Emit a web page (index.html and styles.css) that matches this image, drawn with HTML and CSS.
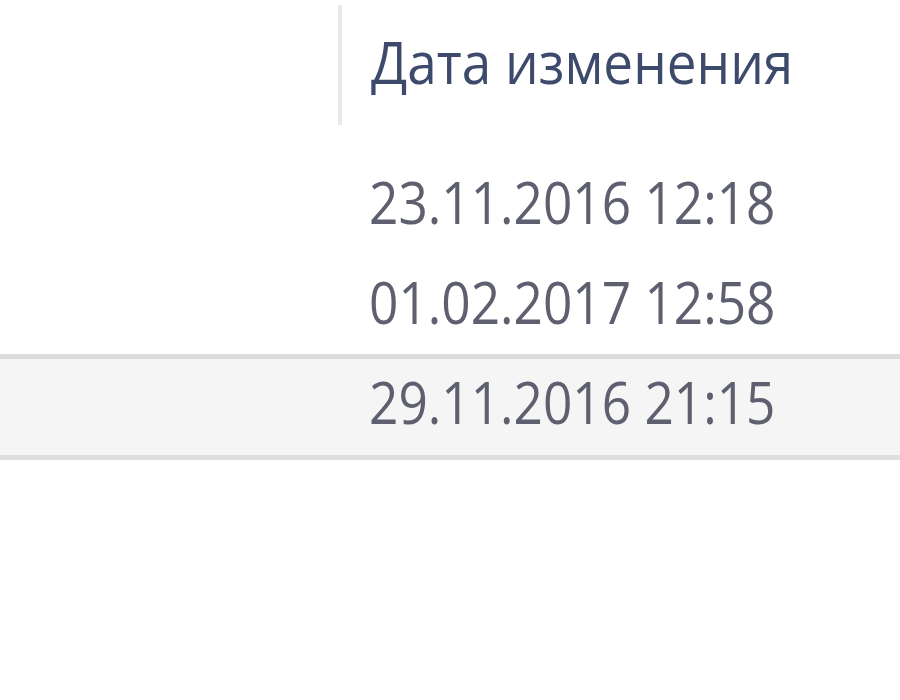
FILE: index.html
```html
<!DOCTYPE html>
<html lang="ru">
<head>
<meta charset="utf-8">
<title>Дата изменения</title>
<link rel="stylesheet" href="styles.css">
</head>
<body>
<div class="list">
  <div class="header">
    <div class="col-name"></div>
    <div class="sep"></div>
    <div class="col-date title"><span class="txt">Дата изменения</span></div>
  </div>
  <div class="row">
    <div class="col-name"></div>
    <div class="col-date"><span class="txt">23.11.2016 12:18</span></div>
  </div>
  <div class="row">
    <div class="col-name"></div>
    <div class="col-date"><span class="txt">01.02.2017 12:58</span></div>
  </div>
  <div class="row row-selected">
    <div class="col-name"></div>
    <div class="col-date"><span class="txt">29.11.2016 21:15</span></div>
  </div>
</div>
</body>
</html>
```
FILE: styles.css
```css
html, body {
  margin: 0;
  padding: 0;
  background: #ffffff;
}

body {
  width: 900px;
  height: 700px;
  overflow: hidden;
  font-family: "Open Sans", "Noto Sans", sans-serif;
  font-size: 58px;
  line-height: 58px;
}

.list {
  display: flex;
  flex-direction: column;
}

.header {
  display: flex;
  height: 154px;
}

.col-name {
  width: 338px;
  flex: none;
}

.sep {
  width: 4px;
  height: 120px;
  margin-top: 5px;
  background: #e9e9e9;
  flex: none;
}

.col-date {
  padding-left: 31px;
  color: #5e6070;
  white-space: nowrap;
}

.txt {
  display: inline-block;
  transform: scaleX(0.886);
  transform-origin: left center;
}

.title {
  padding-left: 29px;
  padding-top: 33px;
  color: #3d4a6c;
}

.title .txt {
  transform: scaleX(0.915);
}

.row {
  display: flex;
  box-sizing: border-box;
  height: 100px;
  padding-top: 14px;
  border-top: 5px solid transparent;
  border-bottom: 5px solid transparent;
}

.row-selected {
  height: 106px;
  background: #f5f5f5;
  border-top-color: #dcdcdc;
  border-bottom-color: #dedede;
}
```
